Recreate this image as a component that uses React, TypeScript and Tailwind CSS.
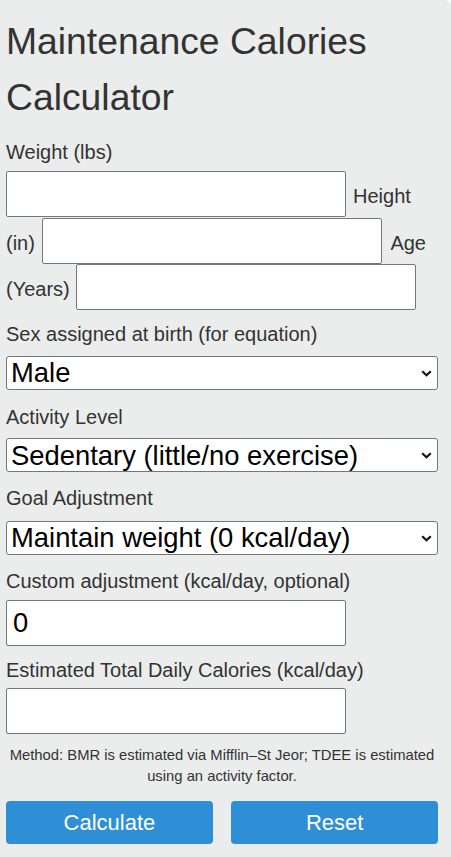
import React from "react";

const labelCls = "block text-[20px] leading-[30px] text-[#333]";
const inputCls =
  "h-[46px] w-[340px] shrink-0 rounded-[2px] border border-[#767676] bg-white pl-[6px] text-[27.4px] text-black outline-none";

function Chevron() {
  return (
    <svg
      className="pointer-events-none absolute right-[6px] top-[14px]"
      width="11"
      height="7"
      viewBox="0 0 11 7"
      fill="none"
    >
      <path d="M1.2 1.2 L5.5 5.3 L9.8 1.2" stroke="#111" strokeWidth="2.2" />
    </svg>
  );
}

function SelectBox({ value, options }: { value: string; options: string[] }) {
  return (
    <div className="relative">
      <select
        defaultValue={value}
        className="block h-[34px] w-full appearance-none rounded-[3px] border border-[#767676] bg-white pl-[4px] text-[27.4px] leading-[normal] text-black outline-none"
      >
        {options.map((o) => (
          <option key={o}>{o}</option>
        ))}
      </select>
      <Chevron />
    </div>
  );
}

export default function App() {
  return (
    <div className="min-h-screen bg-white font-['Liberation_Sans',Arial,sans-serif]">
      <div className="min-h-[857px] rounded-tr-[6px] bg-[#ebecec] pb-[13px] pl-[6px] pr-[13px] pt-[14px]">
        <h1 className="text-[37.3px] font-normal leading-[1.5] text-[#333]">
          Maintenance Calories Calculator
        </h1>

        <label className={`${labelCls} mt-[11.5px]`}>Weight (lbs)</label>

        {/* weight / height / age run together like inline fields */}
        <div className="mt-[4px] flex flex-col gap-[0.5px] text-[20px] leading-[30px] text-[#333]">
          <div className="flex items-baseline">
            <input className={inputCls} />
            <span className="ml-[7px]">Height</span>
          </div>
          <div className="flex items-baseline">
            <span className="mr-[7.5px]">(in)</span>
            <input className={inputCls} />
            <span className="ml-[8px]">Age</span>
          </div>
          <div className="flex items-baseline">
            <span className="mr-[6px]">(Years)</span>
            <input className={inputCls} />
          </div>
        </div>

        <label className={`${labelCls} mt-[8.5px]`}>Sex assigned at birth (for equation)</label>
        <div className="mt-[7px]">
          <SelectBox value="Male" options={["Male", "Female"]} />
        </div>

        <label className={`${labelCls} mt-[11.7px]`}>Activity Level</label>
        <div className="mt-[6.5px]">
          <SelectBox
            value="Sedentary (little/no exercise)"
            options={[
              "Sedentary (little/no exercise)",
              "Lightly active (1-3 days/week)",
              "Moderately active (3-5 days/week)",
              "Very active (6-7 days/week)",
            ]}
          />
        </div>

        <label className={`${labelCls} mt-[11.3px]`}>Goal Adjustment</label>
        <div className="mt-[7.5px]">
          <SelectBox
            value="Maintain weight (0 kcal/day)"
            options={["Lose weight (-500 kcal/day)", "Maintain weight (0 kcal/day)", "Gain weight (+500 kcal/day)"]}
          />
        </div>

        <label className={`${labelCls} mt-[11px]`}>Custom adjustment (kcal/day, optional)</label>
        <input className={`${inputCls} mt-[4px] block`} defaultValue="0" />

        <label className={`${labelCls} mt-[8.7px]`}>Estimated Total Daily Calories (kcal/day)</label>
        <input className={`${inputCls} mt-[3.5px] block`} readOnly />

        <p className="mt-[11px] text-center text-[14.8px] leading-[20.7px] text-[#333]">
          Method: BMR is estimated via Mifflin–St Jeor; TDEE is estimated using an activity factor.
        </p>

        <div className="mt-[14.5px] grid grid-cols-2 gap-[18.5px]">
          <button className="h-[43px] rounded-[4px] bg-[#2e8fd6] text-[22px] text-white">Calculate</button>
          <button className="h-[43px] rounded-[4px] bg-[#2e8fd6] text-[22px] text-white">Reset</button>
        </div>
      </div>
    </div>
  );
}
